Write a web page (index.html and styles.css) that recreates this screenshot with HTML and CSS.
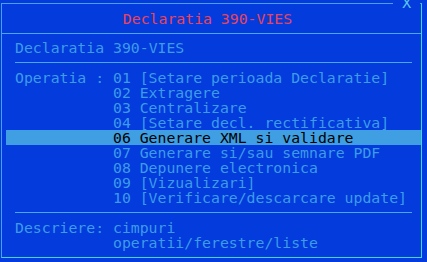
FILE: index.html
```html
<!DOCTYPE html>
<html lang="ro">
<head>
    <meta charset="UTF-8">
    <title>Declaratia 390-VIES</title>
    <link rel="stylesheet" href="styles.css">
</head>
<body>
    <div class="window">
        <span class="close"> X </span>
        <div class="header">Declaratia 390-VIES</div>

        <div class="content">
            <div class="row">Declaratia 390-VIES</div>
            <div class="sep"></div>

            <!-- lista operatii -->
            <div class="row"><span class="label">Operatia :</span><span>01 [Setare perioada Declaratie]</span></div>
            <div class="row"><span class="label"></span><span>02 Extragere</span></div>
            <div class="row"><span class="label"></span><span>03 Centralizare</span></div>
            <div class="row"><span class="label"></span><span>04 [Setare decl. rectificativa]</span></div>
            <div class="row active"><span class="label"></span><span>06 Generare XML si validare</span></div>
            <div class="row"><span class="label"></span><span>07 Generare si/sau semnare PDF</span></div>
            <div class="row"><span class="label"></span><span>08 Depunere electronica</span></div>
            <div class="row"><span class="label"></span><span>09 [Vizualizari]</span></div>
            <div class="row"><span class="label"></span><span>10 [Verificare/descarcare update]</span></div>
            <div class="sep"></div>

            <div class="row"><span class="label">Descriere:</span><span>cimpuri</span></div>
            <div class="row"><span class="label"></span><span>operatii/ferestre/liste</span></div>
        </div>
    </div>
</body>
</html>
```

FILE: styles.css
```css
/* Reset */
* {
    margin: 0;
    padding: 0;
    box-sizing: border-box;
}

body {
    background: #033bdc;
    color: #3d9be9;
    font-family: "DejaVu Sans Mono", "Liberation Mono", monospace;
    font-size: 14.8px;
    overflow: hidden;
}

/* Fereastra */
.window {
    position: relative;
    margin: 3px 0 0 1px;
    width: 421px;
    height: 255px;
    border-top: 1px solid #4c9ef0;
    border-left: 1px solid #4c9ef0;
    border-right: 1px solid #3fd6e6;
    border-bottom: 1px solid #3fd6e6;
}

.close {
    position: absolute;
    top: -8.6px;
    left: 391.3px;
    line-height: 15px;
    white-space: pre;
    background: #033bdc;
    color: #5cc8f0;
}

.header {
    height: 30px;
    line-height: 29px;
    padding-right: 8px;
    text-align: center;
    color: #e8445c;
    border-bottom: 1px solid #4ca6f4;
}

/* Continut */
.content {
    padding: 6.3px 0 0 4px;
}

.row {
    display: flex;
    height: 15px;
    line-height: 15px;
    padding-left: 9px;
    white-space: pre;
}

.label {
    flex: none;
    width: 11ch;
}

.row.active {
    background: #3f9fe2;
    color: #000;
}

.sep {
    height: 8px;
    margin: 0 9px 7px 9px;
    border-bottom: 1px solid #4aa6f0;
}
```
